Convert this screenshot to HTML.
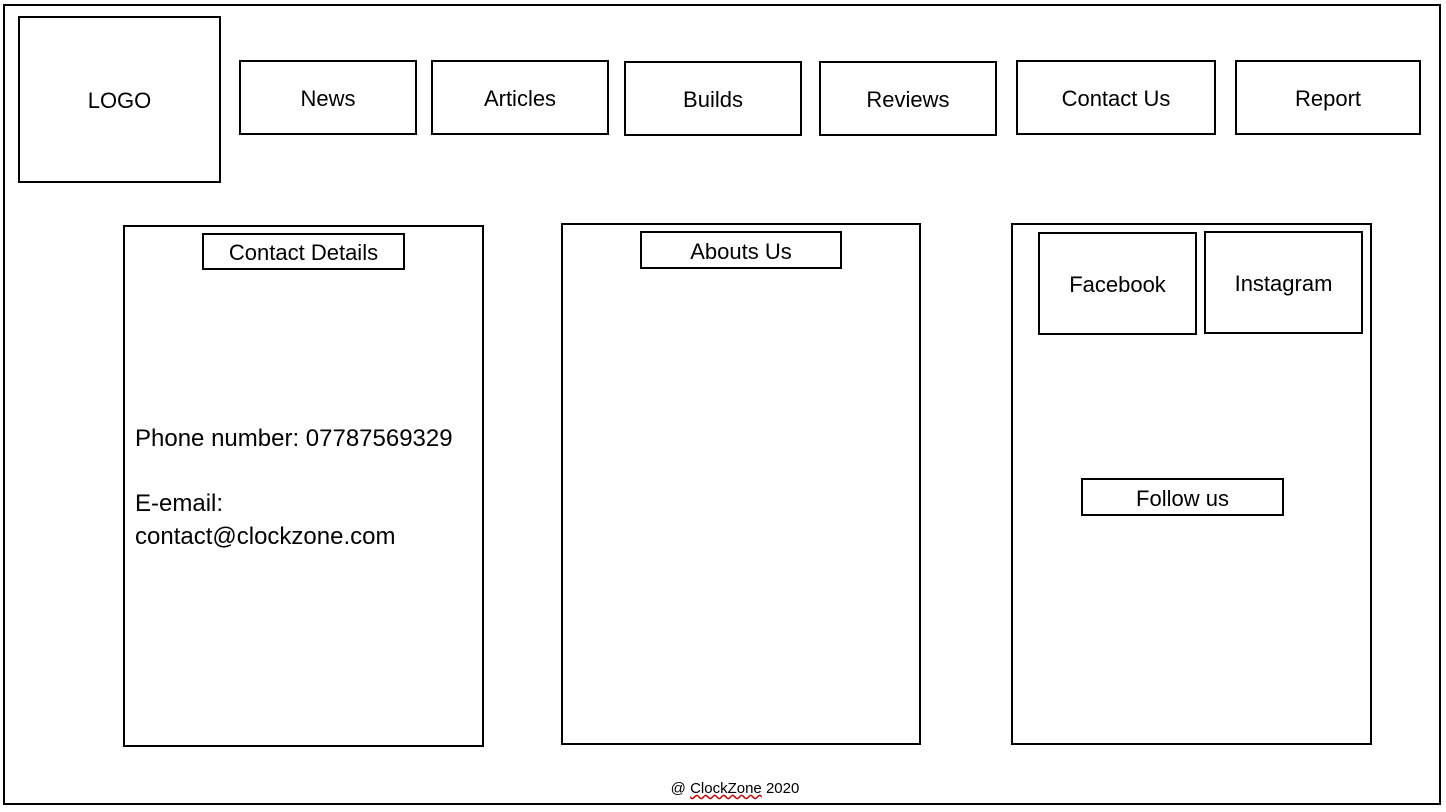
<!DOCTYPE html>
<html><head><meta charset="utf-8"><style>
body{margin:0;width:1446px;height:812px;background:#fff;position:relative;overflow:hidden;font-family:"Liberation Sans",sans-serif;color:#000}
.b{position:absolute;box-sizing:border-box;border:2px solid #000;display:flex;align-items:center;justify-content:center;font-size:22px;padding-top:3px}
.t{position:absolute;font-size:24px;line-height:33px}
</style></head><body>
<div class="b" style="left:3px;top:4px;width:1438px;height:801px"></div>
<div class="b" style="left:18px;top:16px;width:203px;height:167px">LOGO</div>
<div class="b" style="left:239px;top:60px;width:178px;height:75px">News</div>
<div class="b" style="left:431px;top:60px;width:178px;height:75px">Articles</div>
<div class="b" style="left:624px;top:61px;width:178px;height:75px">Builds</div>
<div class="b" style="left:819px;top:61px;width:178px;height:75px">Reviews</div>
<div class="b" style="left:1016px;top:60px;width:200px;height:75px">Contact Us</div>
<div class="b" style="left:1235px;top:60px;width:186px;height:75px">Report</div>

<div class="b" style="left:123px;top:225px;width:361px;height:522px"></div>
<div class="b" style="left:202px;top:233px;width:203px;height:37px">Contact Details</div>
<div class="t" style="left:135px;top:422px">Phone number: 07787569329</div>
<div class="t" style="left:135px;top:487px">E-email:<br>contact@clockzone.com</div>

<div class="b" style="left:561px;top:223px;width:360px;height:522px"></div>
<div class="b" style="left:640px;top:231px;width:202px;height:38px">Abouts Us</div>

<div class="b" style="left:1011px;top:223px;width:361px;height:522px"></div>
<div class="b" style="left:1038px;top:232px;width:159px;height:103px">Facebook</div>
<div class="b" style="left:1204px;top:231px;width:159px;height:103px">Instagram</div>
<div class="b" style="left:1081px;top:478px;width:203px;height:38px">Follow us</div>

<div style="position:absolute;left:0;width:1470px;top:780px;text-align:center;font-size:15px">@ <span style="text-decoration:underline wavy #c00">ClockZone</span> 2020</div>
</body></html>
